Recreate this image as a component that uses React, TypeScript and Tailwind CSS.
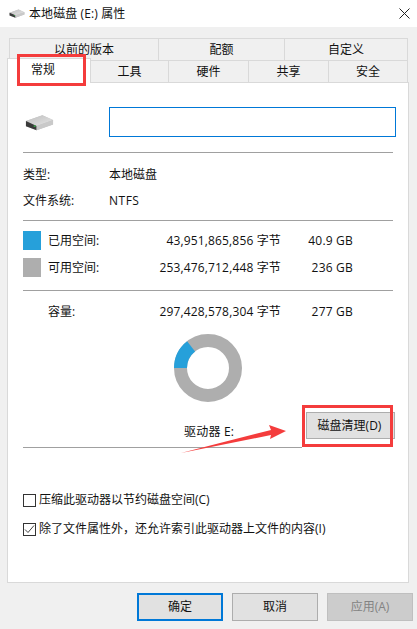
import React from 'react';

const font = { fontFamily: '"Open Sans", "Noto Sans CJK SC", sans-serif' };

const DriveIcon = ({ className }: { className: string }) => (
  <svg viewBox="0 0 30 17" className={className}>
    <defs>
      <linearGradient id="driveTop" x1="0" y1="0" x2="1" y2="1">
        <stop offset="0" stopColor="#bdbdbd" />
        <stop offset="1" stopColor="#e6e6e6" />
      </linearGradient>
    </defs>
    <path d="M1 7 L18 1 L29 6 L29 10.5 L12 16.5 L1 12.5 Z" fill="#c4c4c4" />
    <path d="M1 7 L18 1 L29 6 L12 12 Z" fill="url(#driveTop)" />
    <path d="M1 7 L12 12 L12 16.5 L1 12.5 Z" fill="#3a3a3a" />
    <path d="M12 12 L29 6 L29 10.5 L12 16.5 Z" fill="#c9c9c9" />
    <rect x="9" y="11.5" width="2" height="1.5" fill="#35b04a" />
  </svg>
);

const Tab = ({ label, className }: { label: string; className: string }) => (
  <div className={`flex items-center justify-center border-t border-r border-[#d9d9d9] bg-[#f0f0f0] text-[12px] text-[#111] ${className}`}>
    {label}
  </div>
);

const SpaceRow = ({ color, label, bytes, size, className }: { color?: string; label: string; bytes: string; size: string; className: string }) => (
  <div className={`flex h-[19px] items-center text-[12px] text-[#111] ${className}`}>
    <div className={`h-[19px] w-[18px] ${color ?? ''}`} />
    <span className="ml-[7px] w-[70px]">{label}</span>
    <span className="w-[163px] text-right tracking-[0.15px]">{bytes} 字节</span>
    <span className="w-[72px] text-right tracking-[0.2px]">{size}</span>
  </div>
);

const DialogButton = ({ label, className }: { label: string; className: string }) => (
  <div className={`flex h-[28px] w-[86px] items-center justify-center border text-[12px] ${className}`}>{label}</div>
);

export default function App() {
  return (
    <div className="relative h-[629px] w-[417px] overflow-hidden bg-[#f0f0f0]" style={font}>
      {/* タイトルバー */}
      <div className="flex h-[27px] items-center bg-white pl-[9px] text-[12px] text-[#111]">
        <DriveIcon className="h-[9px] w-[16px]" />
        <span className="ml-[4px] tracking-[0.1px]">本地磁盘 (E:) 属性</span>
        <svg viewBox="0 0 11 11" className="ml-auto mr-[7px] h-[11px] w-[11px]" stroke="#222" fill="none">
          <path d="M0.5 0.5 L10.5 10.5 M10.5 0.5 L0.5 10.5" />
        </svg>
      </div>

      {/* タブ */}
      <div className="ml-[9px] mt-[11px] flex h-[22px] w-[399px] border-l border-[#d9d9d9]">
        <Tab label="以前的版本" className="w-[149px]" />
        <Tab label="配额" className="w-[126px]" />
        <Tab label="自定义" className="w-[123px]" />
      </div>
      <div className="ml-[7px] flex h-[22px] w-[402px]">
        <div className="z-10 -mt-[2px] flex h-[25px] w-[84px] items-center justify-center border-l border-r border-t border-[#d9d9d9] bg-white pb-[3px] pr-[12px] text-[12px] text-[#111]">
          常规
        </div>
        <Tab label="工具" className="w-[78px]" />
        <Tab label="硬件" className="w-[80px]" />
        <Tab label="共享" className="w-[80px]" />
        <Tab label="安全" className="w-[79px]" />
      </div>

      {/* パネル */}
      <div className="ml-[7px] flex h-[501px] w-[402px] flex-col border border-[#d9d9d9] bg-white pl-[15px] pr-[15px]">
        <div className="mt-[24px] flex items-center">
          <DriveIcon className="ml-[2px] h-[17px] w-[29px] shrink-0" />
          <div className="ml-[55px] h-[30px] w-[287px] shrink-0 border border-[#0078d7]" />
        </div>
        <div className="mt-[15px] h-px bg-[#a0a0a0]" />

        <div className="mt-[14px] flex h-[16px] items-center text-[12px] text-[#111]">
          <span className="w-[86px]">类型:</span>
          <span>本地磁盘</span>
        </div>
        <div className="mt-[10px] flex h-[16px] items-center text-[12px] text-[#111]">
          <span className="w-[86px]">文件系统:</span>
          <span className="tracking-[0.5px]">NTFS</span>
        </div>
        <div className="mt-[11px] h-px bg-[#a0a0a0]" />

        <SpaceRow color="bg-[#26a0da]" label="已用空间:" bytes="43,951,865,856" size="40.9 GB" className="mt-[10px]" />
        <SpaceRow color="bg-[#aeaeae]" label="可用空间:" bytes="253,476,712,448" size="236 GB" className="mt-[8px]" />
        <div className="mt-[13px] h-px bg-[#a0a0a0]" />
        <SpaceRow label="容量:" bytes="297,428,578,304" size="277 GB" className="mt-[11px]" />

        {/* 円グラフ */}
        <svg viewBox="0 0 68 68" className="ml-[151px] mt-[13px] h-[68px] w-[68px] shrink-0">
          <circle cx="34" cy="34" r="27.5" fill="none" stroke="#aeaeae" strokeWidth="13" />
          <path d="M6.5 34 A27.5 27.5 0 0 1 17.1 12.3" fill="none" stroke="#26a0da" strokeWidth="13" />
        </svg>

        <div className="mt-[8px] flex h-[29px] items-end">
          <span className="-mb-[2px] ml-[161px] text-[12px] tracking-[0.2px] text-[#111]">驱动器 E:</span>
          <div className="ml-auto mr-[-2px] flex h-[27px] w-[89px] items-center justify-center border border-[#adadad] bg-[#e1e1e1] pr-[2px] text-[12px] text-[#111]">
            磁盘清理(D)
          </div>
        </div>
        <div className="mt-[8px] h-px w-[279px] bg-[#a0a0a0]" />

        <div className="mt-[43px] flex items-center text-[12px] text-[#111]">
          <div className="h-[13px] w-[13px] border border-[#333]" />
          <span className="ml-[3px]">压缩此驱动器以节约磁盘空间(C)</span>
        </div>
        <div className="mt-[11px] flex items-center text-[12px] text-[#111]">
          <div className="h-[13px] w-[13px] border border-[#333]">
            <svg viewBox="0 0 11 11" className="h-[11px] w-[11px]" fill="none" stroke="#444" strokeWidth="1">
              <path d="M1 5.5 L4 8.5 L10 1.5" />
            </svg>
          </div>
          <span className="ml-[3px]">除了文件属性外，还允许索引此驱动器上文件的内容(I)</span>
        </div>
      </div>

      {/* ボタン */}
      <div className="ml-[137px] mt-[10px] flex gap-[9px]">
        <DialogButton label="确定" className="border-2 border-[#0078d7] bg-[#e1e1e1] text-[#111]" />
        <DialogButton label="取消" className="border-[#adadad] bg-[#e1e1e1] text-[#111]" />
        <DialogButton label="应用(A)" className="border-[#bfbfbf] bg-[#cccccc] text-[#838383]" />
      </div>

      {/* 注釈 */}
      <div className="absolute left-[17px] top-[54px] z-20 h-[32px] w-[69px] border-[3px] border-[#f43c3c]" />
      <div className="absolute left-[302px] top-[405px] z-20 h-[42px] w-[91px] border-[3px] border-[#f43c3c]" />
      <svg viewBox="0 0 417 629" className="absolute left-0 top-0 z-20 h-[629px] w-[417px]">
        <path d="M181 453 L271 430 L269 425 L286 431 L270 439 L271 435 Z" fill="#f43c3c" />
      </svg>
    </div>
  );
}
